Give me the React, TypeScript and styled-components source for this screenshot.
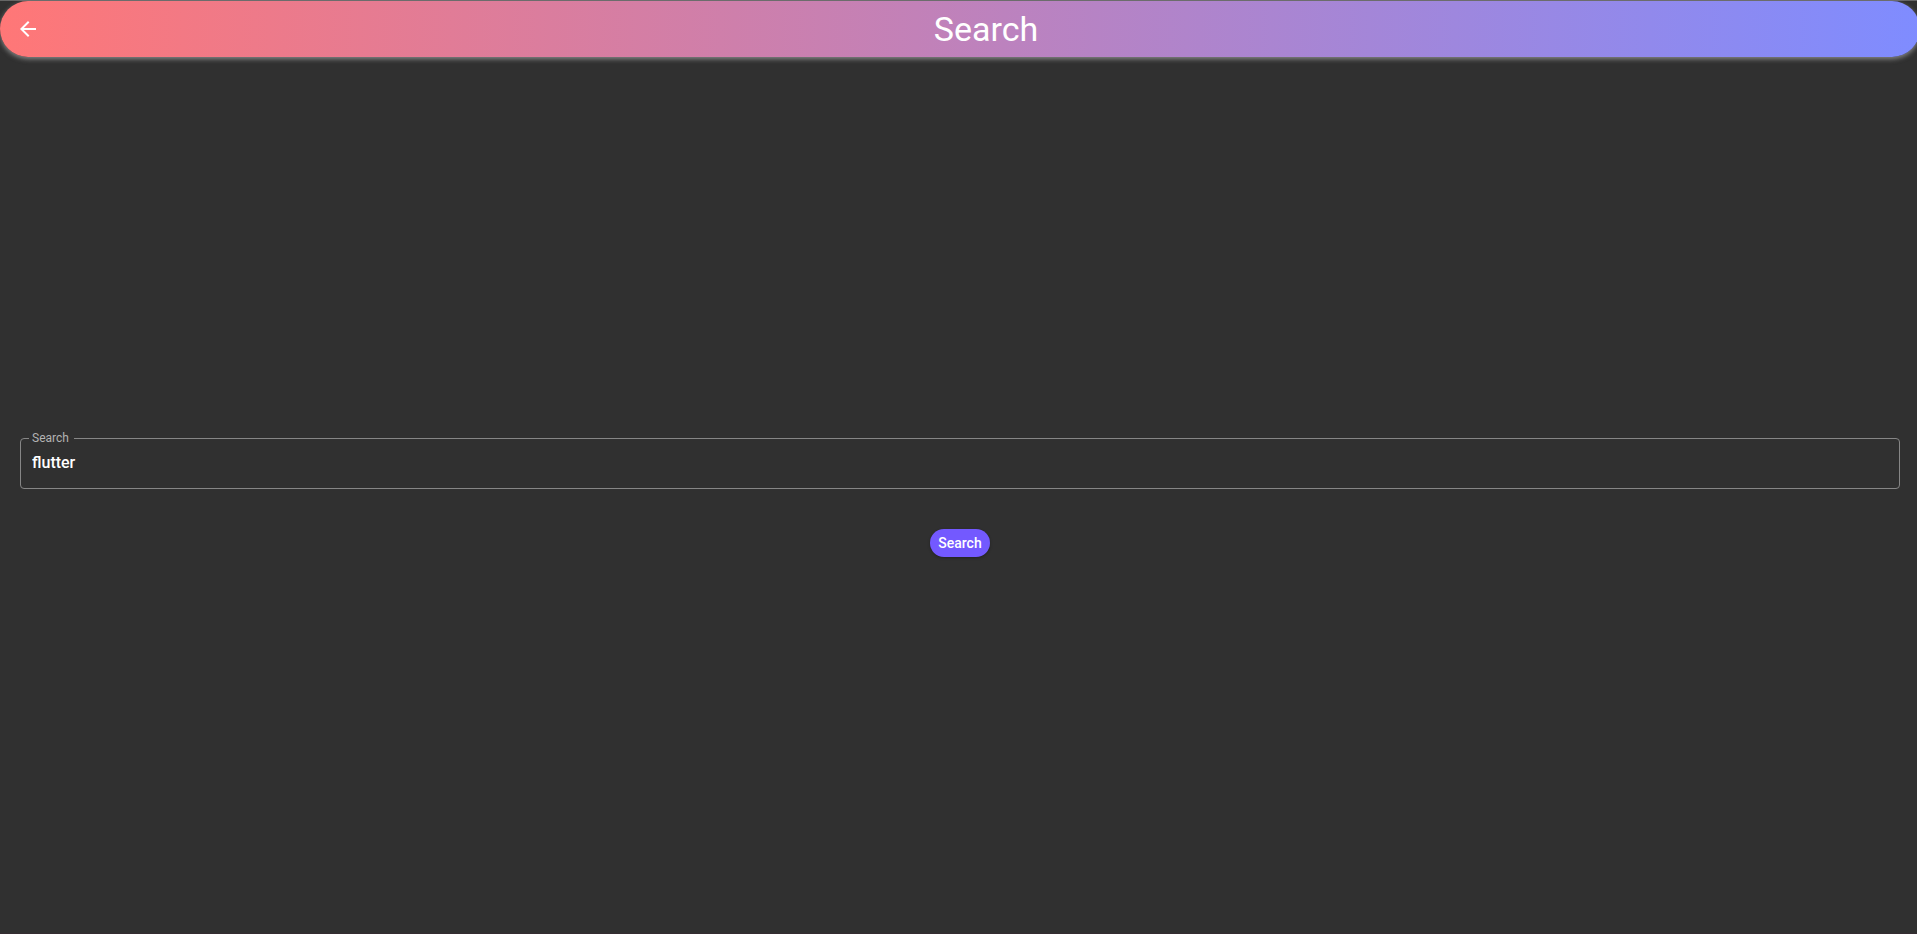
import React, { useState } from "react";
import styled, { createGlobalStyle } from "styled-components";

const GlobalStyle = createGlobalStyle`
  * { box-sizing: border-box; }
  body {
    margin: 0;
    background: #303030;
    color: #fff;
    font-family: Roboto, "Liberation Sans", sans-serif;
    overflow: hidden;
  }
`;

const Screen = styled.div`
  display: flex;
  flex-direction: column;
  width: calc(100% + 3px);
  min-height: 100vh;
  border-top: 1px solid #666;
  border-bottom: 1px solid #352c31;
`;

const AppBar = styled.header`
  display: grid;
  grid-template-columns: 56px 1fr;
  align-items: center;
  height: 56px;
  padding-right: 4px;
  border-radius: 28px;
  background: linear-gradient(90deg, #ff7777, #7f8cff);
  box-shadow: 0 2px 5px rgba(158, 158, 158, 0.8);
`;

const BackButton = styled.button`
  display: flex;
  align-items: center;
  justify-content: center;
  width: 56px;
  height: 56px;
  padding: 0;
  border: 0;
  background: none;
  color: #fff;
  cursor: pointer;
`;

const Title = styled.h1`
  margin: 0;
  font-size: 34px;
  line-height: 40px;
  font-weight: 400;
  text-align: center;
`;

const SearchForm = styled.form`
  display: flex;
  flex: 1;
  flex-direction: column;
  align-items: center;
  justify-content: center;
  gap: 40px;
  padding: 0 20px 2px;
`;

const Outline = styled.fieldset`
  width: 100%;
  min-width: 0;
  height: 58px;
  margin: 0;
  padding: 0 11px;
  border: 1px solid #868686;
  border-radius: 4px;
`;

const Legend = styled.legend`
  margin-left: -3px;
  padding: 0 5px 0 3px;
  font-size: 12px;
  line-height: 14px;
  color: #b3b3b3;
`;

const TextInput = styled.input`
  display: block;
  width: 100%;
  height: 34px;
  padding: 0;
  border: 0;
  outline: 0;
  background: none;
  color: #fff;
  font: 500 16px/20px Roboto, "Liberation Sans", sans-serif;
`;

const SubmitButton = styled.button`
  height: 28px;
  padding: 0 8px;
  border: 0;
  border-radius: 14px;
  background: #7359ff;
  box-shadow: 0 1px 3px rgba(0, 0, 0, 0.3);
  color: #fff;
  font: 500 14px/20px Roboto, "Liberation Sans", sans-serif;
  cursor: pointer;
`;

export default function App() {
  const [query, setQuery] = useState("flutter");
  return (
    <>
      <GlobalStyle />
      <Screen>
        <AppBar>
          <BackButton type="button" aria-label="Back">
            <svg width="24" height="24" viewBox="0 0 24 24" fill="currentColor" aria-hidden="true">
              <path d="M20 11H7.83l5.59-5.59L12 4l-8 8 8 8 1.41-1.41L7.83 13H20v-2z" />
            </svg>
          </BackButton>
          <Title>Search</Title>
        </AppBar>
        <SearchForm onSubmit={(event: React.FormEvent) => event.preventDefault()}>
          <Outline>
            <Legend>
              <label htmlFor="query">Search</label>
            </Legend>
            <TextInput
              id="query"
              type="text"
              value={query}
              onChange={(event: React.ChangeEvent<HTMLInputElement>) => setQuery(event.target.value)}
            />
          </Outline>
          <SubmitButton type="submit">Search</SubmitButton>
        </SearchForm>
      </Screen>
    </>
  );
}
